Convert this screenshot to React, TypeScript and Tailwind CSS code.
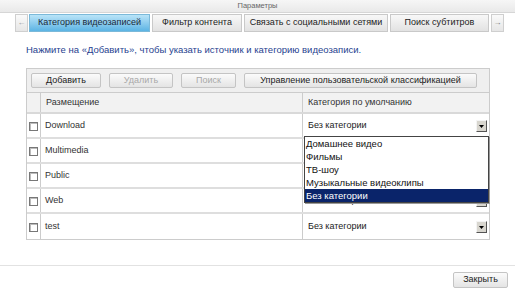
import { useState } from "react";

const tabs = [
  "Категория видеозаписей",
  "Фильтр контента",
  "Связать с социальными сетями",
  "Поиск субтитров",
];

const rows = ["Download", "Multimedia", "Public", "Web", "test"];

const options = [
  "Домашнее видео",
  "Фильмы",
  "ТВ-шоу",
  "Музыкальные видеоклипы",
  "Без категории",
];

const ToolButton = ({ label, disabled, className }: { label: string; disabled?: boolean; className: string }) => (
  <button
    className={`h-[15px] rounded-[2px] border border-[#c4c4c4] bg-gradient-to-b from-[#fbfbfb] to-[#e4e4e4] text-[9px] leading-none ${
      disabled ? "text-[#a8a8a8]" : "text-[#222]"
    } ${className}`}
  >
    {label}
  </button>
);

const Checkbox = () => (
  <span className="block h-[9px] w-[9px] border border-[#777] bg-white shadow-[inset_1px_1px_0_#bbb]" />
);

const ArrowButton = () => (
  <span className="flex h-[12px] w-[11px] items-center justify-center border border-t-[#f4f4f4] border-l-[#f4f4f4] border-r-[#555] border-b-[#555] bg-[#d8d6cf]">
    <svg width="5" height="3" viewBox="0 0 5 3">
      <path d="M0 0h5L2.5 3z" fill="#000" />
    </svg>
  </span>
);

const Select = () => (
  <div className="flex h-full items-center justify-between pl-[5px] pr-[2px] pt-[1px]">
    <span className="text-[9px] text-[#222]">Без категории</span>
    <ArrowButton />
  </div>
);

export default function App() {
  const [open] = useState(true);
  return (
    <div className="relative flex h-[292px] w-[515px] flex-col overflow-hidden bg-white font-['Liberation_Sans',Arial,sans-serif]">
      <div className="flex h-[13px] items-center justify-center border-b border-[#d6d6d6] bg-gradient-to-b from-[#f6f6f6] to-[#e9e9e9] text-[7.5px] text-[#666]">
        Параметры
      </div>

      <div className="flex h-[19px] items-stretch pl-[15px] pt-[1px]">
        <div className="flex w-[13px] items-center justify-center border border-[#cfcfcf] bg-gradient-to-b from-[#fafafa] to-[#e6e6e6] text-[8px] text-[#999]">
          ←
        </div>
        <div className="ml-[1px] flex w-[121px] items-center justify-center border border-[#7bb9d9] bg-gradient-to-b from-[#b9e4f8] to-[#5bb4e4] text-[9px] text-[#1b2a3a]">
          {tabs[0]}
        </div>
        <div className="ml-[2px] flex w-[90px] items-center justify-center border border-[#c9c9c9] bg-gradient-to-b from-[#f8f8f8] to-[#e2e2e2] text-[9px] text-[#222]">
          {tabs[1]}
        </div>
        <div className="ml-[2px] flex w-[144px] items-center justify-center border border-[#c9c9c9] bg-gradient-to-b from-[#f8f8f8] to-[#e2e2e2] text-[9px] text-[#222]">
          {tabs[2]}
        </div>
        <div className="ml-[2px] flex w-[99px] items-center justify-center border border-[#c9c9c9] bg-gradient-to-b from-[#f8f8f8] to-[#e2e2e2] text-[9px] text-[#222]">
          {tabs[3]}
        </div>
        <div className="ml-[2px] flex w-[13px] items-center justify-center border border-[#cfcfcf] bg-gradient-to-b from-[#fafafa] to-[#e6e6e6] text-[8px] text-[#777]">
          →
        </div>
      </div>

      <div className="pl-[26px] pt-[12px] text-[9.5px] leading-[12px] text-[#1f3f8f]">
        Нажмите на «Добавить», чтобы указать источник и категорию видеозаписи.
      </div>

      <div className="relative ml-[26px] mt-[12px] w-[464px] border border-[#cccccc]">
        <div className="flex h-[24px] items-center gap-[8px] border-b border-[#cccccc] bg-[#efefef] pl-[4px]">
          <ToolButton label="Добавить" className="w-[70px]" />
          <ToolButton label="Удалить" disabled className="w-[64px]" />
          <ToolButton label="Поиск" disabled className="w-[55px]" />
          <ToolButton label="Управление пользовательской классификацией" className="w-[233px]" />
        </div>
        <div className="flex h-[21px] border-b-2 border-[#d9d9d9] bg-[#f2f2f2] text-[9px] text-[#333]">
          <div className="w-[14px] border-r border-[#cccccc]" />
          <div className="flex w-[262px] items-center border-r border-[#cccccc] pl-[5px]">Размещение</div>
          <div className="flex flex-1 items-center pl-[5px]">Категория по умолчанию</div>
        </div>
        {rows.map((r, i) => (
          <div
            key={r}
            className={`flex h-[25px] text-[9px] text-[#333] ${i < rows.length - 1 ? "border-b-2 border-[#dedede]" : ""}`}
          >
            <div className="flex w-[14px] items-center justify-center border-r border-[#cccccc] pt-[1px]">
              <Checkbox />
            </div>
            <div className="flex w-[262px] items-center border-r border-[#cccccc] pl-[4px] pt-[1px]">{r}</div>
            <div className="flex-1">{(i === 0 || i >= 3) && <Select />}</div>
          </div>
        ))}

        {open && (
          <div className="absolute left-[277px] top-[67px] w-[185px] border border-[#444] bg-white text-[9.5px] text-[#111] shadow-[1px_1px_0_#999]">
            {options.map((o, i) => (
              <div
                key={o}
                className={`h-[13px] pl-[1px] leading-[13px] ${i === options.length - 1 ? "bg-[#0a246a] text-white" : ""}`}
              >
                {o}
              </div>
            ))}
          </div>
        )}
      </div>

      <div className="mt-auto border-t border-[#e2e2e2] pb-[4px] pr-[7px] pt-[6px]">
        <div className="flex justify-end">
          <button className="h-[16px] w-[55px] rounded-[2px] border border-[#c4c4c4] bg-gradient-to-b from-[#fbfbfb] to-[#e4e4e4] text-[9px] text-[#222]">
            Закрыть
          </button>
        </div>
      </div>
    </div>
  );
}
